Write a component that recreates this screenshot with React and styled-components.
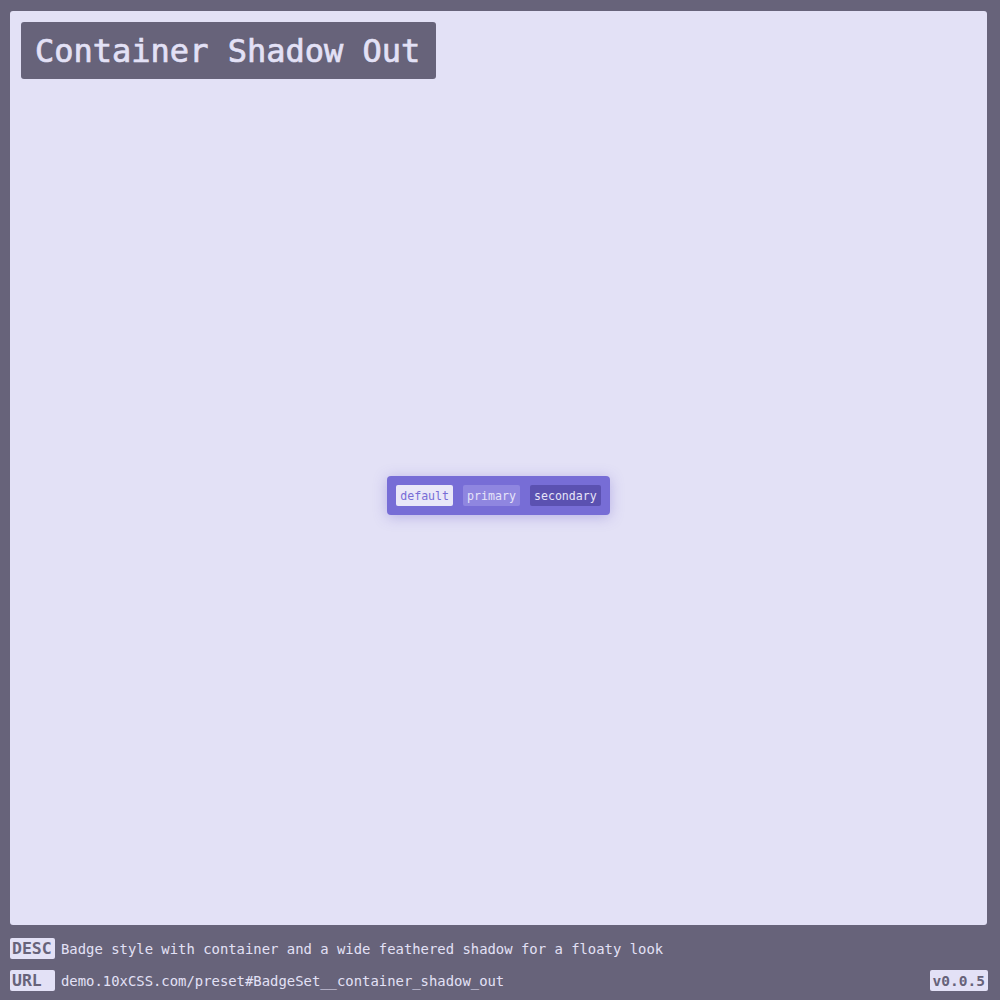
import React from "react";
import styled, { createGlobalStyle } from "styled-components";

const Global = createGlobalStyle`
  html, body { margin: 0; padding: 0; background: #67637a; }
  body { font-family: "DejaVu Sans Mono", "Liberation Mono", monospace; }
`;

const Page = styled.div`
  width: 1000px;
  height: 1000px;
  box-sizing: border-box;
  padding: 11px 13px 0 10px;
  display: flex;
  flex-direction: column;
`;

const Panel = styled.div`
  height: 914px;
  box-sizing: border-box;
  background: #e3e1f6;
  border-radius: 3px;
  padding: 11px 11px 13px;
  display: flex;
  flex-direction: column;
`;

const Title = styled.h1`
  align-self: flex-start;
  margin: 0;
  height: 57px;
  box-sizing: border-box;
  padding: 0 16px 0 14px;
  display: flex;
  align-items: center;
  background: #67637a;
  color: #e3e1f6;
  border-radius: 3px;
  font-family: "DejaVu Sans Mono", "Liberation Mono", monospace;
  font-size: 32px;
  font-weight: normal;
  -webkit-text-stroke: 0.7px #e3e1f6;
`;

const Stage = styled.div`
  flex: 1;
  display: flex;
  align-items: center;
  justify-content: center;
`;

const BadgeSet = styled.div`
  display: flex;
  gap: 10px;
  padding: 9px 9px;
  background: #776dd6;
  border-radius: 4px;
  box-shadow: 0 2px 14px rgba(103, 90, 200, 0.35);
`;

const variants = {
  default: { bg: "#e9e7f8", fg: "#776dd6" },
  primary: { bg: "#8f86e0", fg: "#e6e4f8" },
  secondary: { bg: "#5b51b1", fg: "#e6e4f8" },
};

const Badge = styled.span`
  display: inline-flex;
  align-items: center;
  height: 21px;
  padding: 0 4px;
  border-radius: 2px;
  font-family: "DejaVu Sans Mono", "Liberation Mono", monospace;
  font-size: 11.6px;
  background: ${(p) => variants[p.$v].bg};
  color: ${(p) => variants[p.$v].fg};
`;

const Footer = styled.div`
  display: flex;
  flex-direction: column;
  gap: 11px;
  padding-top: 13px;
`;

const Row = styled.div`
  display: flex;
  align-items: center;
  height: 21px;
  gap: 6px;
`;

const Label = styled.span`
  display: inline-flex;
  align-items: center;
  min-width: 45px;
  height: 21px;
  box-sizing: border-box;
  padding: 0 2px;
  background: #e3e1f6;
  color: #67637a;
  border-radius: 2px;
  font-family: "DejaVu Sans Mono", "Liberation Mono", monospace;
  font-size: 16.5px;
  font-weight: bold;
`;

const Text = styled.span`
  color: #e3e1f6;
  font-family: "DejaVu Sans Mono", "Liberation Mono", monospace;
  font-size: 13.9px;
  flex: 1;
`;

const Version = styled.span`
  display: inline-flex;
  align-items: center;
  height: 21px;
  padding: 0 3px;
  margin-right: -1px;
  background: #e3e1f6;
  color: #67637a;
  border-radius: 2px;
  font-family: "DejaVu Sans Mono", "Liberation Mono", monospace;
  font-size: 14.5px;
  font-weight: bold;
`;

export default function App() {
  return (
    <>
      <Global />
      <Page>
        <Panel>
          <Title>Container Shadow Out</Title>
          <Stage>
            <BadgeSet>
              <Badge $v="default">default</Badge>
              <Badge $v="primary">primary</Badge>
              <Badge $v="secondary">secondary</Badge>
            </BadgeSet>
          </Stage>
        </Panel>
        <Footer>
          <Row>
            <Label>DESC</Label>
            <Text>Badge style with container and a wide feathered shadow for a floaty look</Text>
          </Row>
          <Row>
            <Label>URL</Label>
            <Text>demo.10xCSS.com/preset#BadgeSet__container_shadow_out</Text>
            <Version>v0.0.5</Version>
          </Row>
        </Footer>
      </Page>
    </>
  );
}
